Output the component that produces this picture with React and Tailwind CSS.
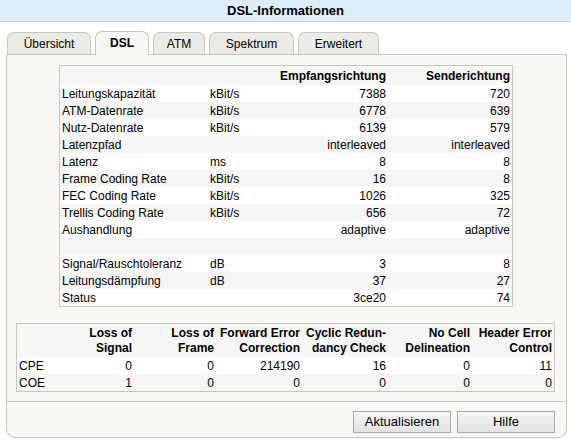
import React from "react";

const tabs = [
  { label: "Übersicht", w: "w-[84px]" },
  { label: "DSL", w: "w-[54px]", active: true },
  { label: "ATM", w: "w-[52px]" },
  { label: "Spektrum", w: "w-[85px]" },
  { label: "Erweitert", w: "w-[81px]" },
];

const dslRows = [
  ["Leitungskapazität", "kBit/s", "7388", "720"],
  ["ATM-Datenrate", "kBit/s", "6778", "639"],
  ["Nutz-Datenrate", "kBit/s", "6139", "579"],
  ["Latenzpfad", "", "interleaved", "interleaved"],
  ["Latenz", "ms", "8", "8"],
  ["Frame Coding Rate", "kBit/s", "16", "8"],
  ["FEC Coding Rate", "kBit/s", "1026", "325"],
  ["Trellis Coding Rate", "kBit/s", "656", "72"],
  ["Aushandlung", "", "adaptive", "adaptive"],
  ["", "", "", ""],
  ["Signal/Rauschtoleranz", "dB", "3", "8"],
  ["Leitungsdämpfung", "dB", "37", "27"],
  ["Status", "", "3ce20", "74"],
];

const errHead = [
  ["Loss of", "Signal"],
  ["Loss of", "Frame"],
  ["Forward Error", "Correction"],
  ["Cyclic Redun-", "dancy Check"],
  ["No Cell", "Delineation"],
  ["Header Error", "Control"],
];

const errRows = [
  ["CPE", "0", "0", "214190", "16", "0", "11"],
  ["COE", "1", "0", "0", "0", "0", "0"],
];

export default function App() {
  return (
    <div className="w-[571px] h-[445px] bg-white text-[12px] text-black overflow-hidden" style={{ fontFamily: '"Liberation Sans", Arial, sans-serif' }}>
      {/* title */}
      <div className="h-[22px] bg-[#deedf8] border-b border-[#b9d0e2] flex items-center justify-center font-bold text-[13px]">
        DSL-Informationen
      </div>

      {/* tabs */}
      <div className="flex items-end gap-[4px] pl-[7px] h-[32px] relative z-10">
        {tabs.map((t) => (
          <div
            key={t.label}
            className={
              t.w +
              " flex items-center justify-center rounded-t-[7px] border border-[#c6c6be] " +
              (t.active
                ? "h-[24px] bg-[#f9f8f4] border-b-[#f9f8f4] font-bold -mb-px"
                : "h-[22px] bg-[#ecebe5] border-b-0")
            }
          >
            {t.label}
          </div>
        ))}
      </div>

      {/* panel */}
      <div className="mx-[6px] w-[561px] h-[384px] bg-[#f9f8f4] border border-[#c6c6be] rounded-b-[9px] flex flex-col">
        <div className="pt-[10px] pl-[52px]">
          <div className="w-[454px] border border-[#c6c6be] bg-white">
            <div className="grid grid-cols-[150px_70px_108px_124px] h-[19px] items-center bg-[#f6f6f4] font-bold">
              <div></div>
              <div></div>
              <div className="text-right pr-[2px]">Empfangsrichtung</div>
              <div className="text-right pr-[2px]">Senderichtung</div>
            </div>
            {dslRows.map((r, i) => (
              <div
                key={i}
                className={
                  "grid grid-cols-[150px_70px_108px_124px] h-[17px] items-center " +
                  (i % 2 ? "bg-[#f6f6f4]" : "bg-white")
                }
              >
                <div className="pl-[2px] whitespace-nowrap">{r[0]}</div>
                <div>{r[1]}</div>
                <div className="text-right pr-[2px]">{r[2]}</div>
                <div className="text-right pr-[2px]">{r[3]}</div>
              </div>
            ))}
          </div>
        </div>

        <div className="pt-[16px] pl-[9px]">
          <div className="w-[539px] border border-[#c6c6be] bg-white">
            <div className="grid grid-cols-[43px_74px_82px_86px_86px_84px_82px] h-[33px] items-center bg-[#f6f6f4] font-bold leading-[15px]">
              <div></div>
              {errHead.map((h) => (
                <div key={h[1]} className="text-right pr-[2px] whitespace-nowrap">
                  {h[0]}
                  <br />
                  {h[1]}
                </div>
              ))}
            </div>
            {errRows.map((r, i) => (
              <div
                key={r[0]}
                className={
                  "grid grid-cols-[43px_74px_82px_86px_86px_84px_82px] h-[17px] items-center " +
                  (i % 2 ? "bg-[#f6f6f4]" : "bg-white")
                }
              >
                {r.map((c, j) => (
                  <div key={j} className={j === 0 ? "pl-[2px]" : "text-right pr-[2px]"}>
                    {c}
                  </div>
                ))}
              </div>
            ))}
          </div>
        </div>

        <div className="mt-[9px] border-t border-[#c6c6be] flex-1 flex justify-end items-start gap-[6px] pt-[9px] pr-[11px]">
          <button className="w-[98px] h-[22px] border border-[#a7a7a7] bg-gradient-to-b from-[#f6f6f6] to-[#e2e2e2] text-[13px]">
            Aktualisieren
          </button>
          <button className="w-[98px] h-[22px] border border-[#a7a7a7] bg-gradient-to-b from-[#f6f6f6] to-[#e2e2e2] text-[13px]">
            Hilfe
          </button>
        </div>
      </div>
    </div>
  );
}
